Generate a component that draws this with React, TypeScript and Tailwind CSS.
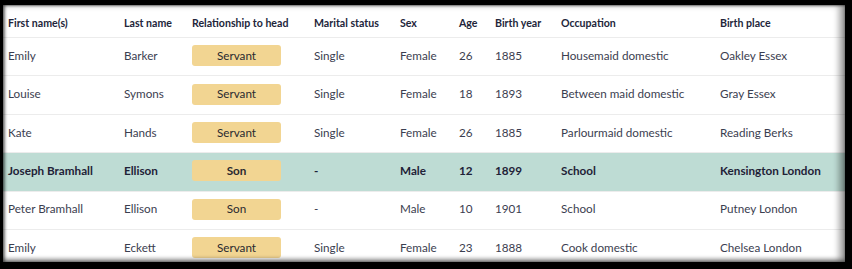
import React from "react";

type Person = {
  first: string;
  last: string;
  rel: string;
  marital: string;
  sex: string;
  age: string;
  year: string;
  job: string;
  place: string;
  active?: boolean;
};

const people: Person[] = [
  { first: "Emily", last: "Barker", rel: "Servant", marital: "Single", sex: "Female", age: "26", year: "1885", job: "Housemaid domestic", place: "Oakley Essex" },
  { first: "Louise", last: "Symons", rel: "Servant", marital: "Single", sex: "Female", age: "18", year: "1893", job: "Between maid domestic", place: "Gray Essex" },
  { first: "Kate", last: "Hands", rel: "Servant", marital: "Single", sex: "Female", age: "26", year: "1885", job: "Parlourmaid domestic", place: "Reading Berks" },
  { first: "Joseph Bramhall", last: "Ellison", rel: "Son", marital: "-", sex: "Male", age: "12", year: "1899", job: "School", place: "Kensington London", active: true },
  { first: "Peter Bramhall", last: "Ellison", rel: "Son", marital: "-", sex: "Male", age: "10", year: "1901", job: "School", place: "Putney London" },
  { first: "Emily", last: "Eckett", rel: "Servant", marital: "Single", sex: "Female", age: "23", year: "1888", job: "Cook domestic", place: "Chelsea London" },
];

const cols = "grid grid-cols-[116px_68px_122px_86px_59px_36px_66px_159px_1fr] items-center pl-[5px]";

export default function App() {
  return (
    <div className="w-[852px] h-[269px] bg-black overflow-hidden pt-[5px] pl-[3px]" style={{ fontFamily: "Lato, 'Open Sans', sans-serif" }}>
      <div className="relative w-[842px] h-[257px] bg-white overflow-hidden">
        {/* Header */}
        <div className={`${cols} h-[33px] pt-[5px] border-b border-[#ececec] text-[10.6px] font-bold text-[#22253a]`}>
          <span>First name(s)</span>
          <span>Last name</span>
          <span>Relationship to head</span>
          <span>Marital status</span>
          <span>Sex</span>
          <span>Age</span>
          <span>Birth year</span>
          <span>Occupation</span>
          <span>Birth place</span>
        </div>

        {/* Rows */}
        {people.map((p, i) => (
          <div
            key={i}
            className={`${cols} h-[38.4px] pb-[2px] border-b border-[#ececec] text-[11.7px] ${
              p.active ? "bg-[#bedcd4] font-bold text-[#1f2237]" : "text-[#3b3e50]"
            }`}
          >
            <span>{p.first}</span>
            <span>{p.last}</span>
            <span className="w-[89px] h-[21px] rounded-[3px] bg-[#f2d592] flex items-center justify-center text-[#2a2a30]">
              {p.rel}
            </span>
            <span>{p.marital}</span>
            <span>{p.sex}</span>
            <span>{p.age}</span>
            <span>{p.year}</span>
            <span>{p.job}</span>
            <span>{p.place}</span>
          </div>
        ))}

        {/* screen edge shading */}
        <div className="absolute inset-0 pointer-events-none shadow-[inset_2px_0_3px_rgba(0,0,0,0.45),inset_-6px_0_6px_rgba(0,0,0,0.35),inset_0_-3px_4px_rgba(0,0,0,0.35),inset_0_1px_2px_rgba(0,0,0,0.3)]" />
      </div>
    </div>
  );
}
